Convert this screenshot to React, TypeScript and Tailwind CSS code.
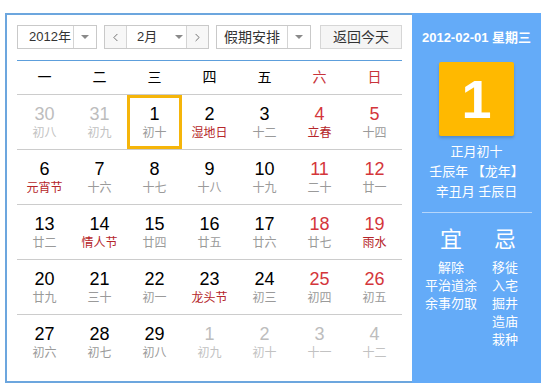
import React from 'react';
import { ChevronLeft, ChevronRight } from 'lucide-react';

type Day = { n: number; sub: string; kind?: 'other' | 'fest'; weekend?: boolean; sel?: boolean };

const weeks: Day[][] = [
  [
    { n: 30, sub: '初八', kind: 'other' },
    { n: 31, sub: '初九', kind: 'other' },
    { n: 1, sub: '初十', sel: true },
    { n: 2, sub: '湿地日', kind: 'fest' },
    { n: 3, sub: '十二' },
    { n: 4, sub: '立春', kind: 'fest', weekend: true },
    { n: 5, sub: '十四', weekend: true },
  ],
  [
    { n: 6, sub: '元宵节', kind: 'fest' },
    { n: 7, sub: '十六' },
    { n: 8, sub: '十七' },
    { n: 9, sub: '十八' },
    { n: 10, sub: '十九' },
    { n: 11, sub: '二十', weekend: true },
    { n: 12, sub: '廿一', weekend: true },
  ],
  [
    { n: 13, sub: '廿二' },
    { n: 14, sub: '情人节', kind: 'fest' },
    { n: 15, sub: '廿四' },
    { n: 16, sub: '廿五' },
    { n: 17, sub: '廿六' },
    { n: 18, sub: '廿七', weekend: true },
    { n: 19, sub: '雨水', kind: 'fest', weekend: true },
  ],
  [
    { n: 20, sub: '廿九' },
    { n: 21, sub: '三十' },
    { n: 22, sub: '初一' },
    { n: 23, sub: '龙头节', kind: 'fest' },
    { n: 24, sub: '初三' },
    { n: 25, sub: '初四', weekend: true },
    { n: 26, sub: '初五', weekend: true },
  ],
  [
    { n: 27, sub: '初六' },
    { n: 28, sub: '初七' },
    { n: 29, sub: '初八' },
    { n: 1, sub: '初九', kind: 'other' },
    { n: 2, sub: '初十', kind: 'other' },
    { n: 3, sub: '十一', kind: 'other', weekend: true },
    { n: 4, sub: '十二', kind: 'other', weekend: true },
  ],
];

const weekdays = ['一', '二', '三', '四', '五', '六', '日'];

const Caret = () => (
  <span className="w-0 h-0 border-x-[4px] border-x-transparent border-t-[4px] border-t-[#8a8a8a]" />
);

const DayCell: React.FC<{ d: Day }> = ({ d }) => {
  const numColor = d.kind === 'other' ? 'text-[#bdbdbd]' : d.weekend ? 'text-[#d4363b]' : 'text-black';
  const subColor = d.kind === 'other' ? 'text-[#c2c2c2]' : d.kind === 'fest' ? 'text-[#b5262a]' : 'text-[#9a9a9a]';
  return (
    <div
      className={`h-[54px] flex flex-col items-center ${
        d.sel ? 'border-[3px] border-[#f5b50a] pt-[6px]' : 'pt-[9px]'
      }`}
    >
      <span className={`text-[18px] leading-[20px] ${numColor}`}>{d.n}</span>
      <span className={`text-[12px] leading-[16px] mt-[1px] ${subColor}`}>{d.sub}</span>
    </div>
  );
};

export default function App() {
  return (
    <div
      className="w-[541px] h-[383px] overflow-hidden bg-white"
      style={{ fontFamily: '"Liberation Sans", "Noto Sans CJK SC", sans-serif' }}
    >
      <div className="ml-[5px] mt-[13px] flex">
        {/* Calendar body */}
        <div className="w-[407px] border-l-2 border-t-2 border-b-2 border-[#6ca6de] pt-[10px] px-[10px] pb-[11px]">
          <div className="flex items-center h-[24px] text-[#333]">
            <div className="w-[80px] h-[24px] flex border border-[#c9c9c9] bg-white">
              <div className="w-[55px] flex items-center pl-[11px] text-[13px]">2012年</div>
              <div className="flex-1 flex items-center justify-center border-l border-[#d4d4d4]">
                <Caret />
              </div>
            </div>
            <div className="ml-[7px] w-[105px] h-[24px] flex border border-[#c9c9c9] bg-white">
              <div className="w-[22px] flex items-center justify-center border-r border-[#d4d4d4] bg-[#f7f7f7]">
                <ChevronLeft size={13} strokeWidth={1.5} className="text-[#555]" />
              </div>
              <div className="w-[59px] flex items-center pl-[10px] text-[13px]">
                <span>2月</span>
                <span className="ml-[18px] flex">
                  <Caret />
                </span>
              </div>
              <div className="flex-1 flex items-center justify-center border-l border-[#d4d4d4] bg-[#f7f7f7]">
                <ChevronRight size={13} strokeWidth={1.5} className="text-[#555]" />
              </div>
            </div>
            <div className="ml-[7px] w-[95px] h-[24px] flex border border-[#c9c9c9] bg-white">
              <div className="w-[70px] flex items-center justify-center text-[14px]">假期安排</div>
              <div className="flex-1 flex items-center justify-center border-l border-[#d4d4d4]">
                <Caret />
              </div>
            </div>
            <button className="ml-[9px] w-[82px] h-[24px] border border-[#d6d6d6] bg-[#f5f5f5] text-[14px] text-[#333]">
              返回今天
            </button>
          </div>

          <div className="mt-[11px] border-t border-[#5d9fdc]" />

          <div className="grid grid-cols-7 h-[34px] border-b border-[#cccccc] text-[14px]">
            {weekdays.map((w, i) => (
              <div
                key={w}
                className={`flex items-center justify-center ${i >= 5 ? 'text-[#c8333a]' : 'text-black'}`}
              >
                {w}
              </div>
            ))}
          </div>

          {weeks.map((row, ri) => (
            <div
              key={ri}
              className={`grid grid-cols-7 ${ri < weeks.length - 1 ? 'border-b border-[#cccccc]' : ''}`}
            >
              {row.map((d, ci) => (
                <DayCell key={ci} d={d} />
              ))}
            </div>
          ))}
        </div>

        {/* Side panel */}
        <div className="w-[129px] h-[370px] bg-[#64abf8] flex flex-col items-center text-white pt-[15px]">
          <div className="text-[13px] leading-[20px] font-bold">2012-02-01 星期三</div>
          <div className="mt-[14px] w-[75px] h-[74px] bg-[#ffb900] rounded-[2px] shadow-[0_2px_3px_rgba(0,0,0,0.18)] flex items-center justify-center">
            <span className="text-[54px] leading-none font-bold">1</span>
          </div>
          <div className="mt-[6px] flex flex-col items-center text-[13px] leading-[20px]">
            <span>正月初十</span>
            <span>壬辰年 【龙年】</span>
            <span>辛丑月 壬辰日</span>
          </div>
          <div className="mt-[10px] w-[110px] border-t border-[#b5d6fb]" />
          <div className="mt-[14px] w-full pl-[12px] flex">
            <div className="w-[54px] flex flex-col items-center">
              <span className="text-[22px] leading-[26px]">宜</span>
              <div className="mt-[6px] flex flex-col items-center text-[13px] leading-[18px]">
                <span>解除</span>
                <span>平治道涂</span>
                <span>余事勿取</span>
              </div>
            </div>
            <div className="w-[54px] flex flex-col items-center">
              <span className="text-[22px] leading-[26px]">忌</span>
              <div className="mt-[6px] flex flex-col items-center text-[13px] leading-[18px]">
                <span>移徙</span>
                <span>入宅</span>
                <span>掘井</span>
                <span>造庙</span>
                <span>栽种</span>
              </div>
            </div>
          </div>
        </div>
      </div>
    </div>
  );
}
